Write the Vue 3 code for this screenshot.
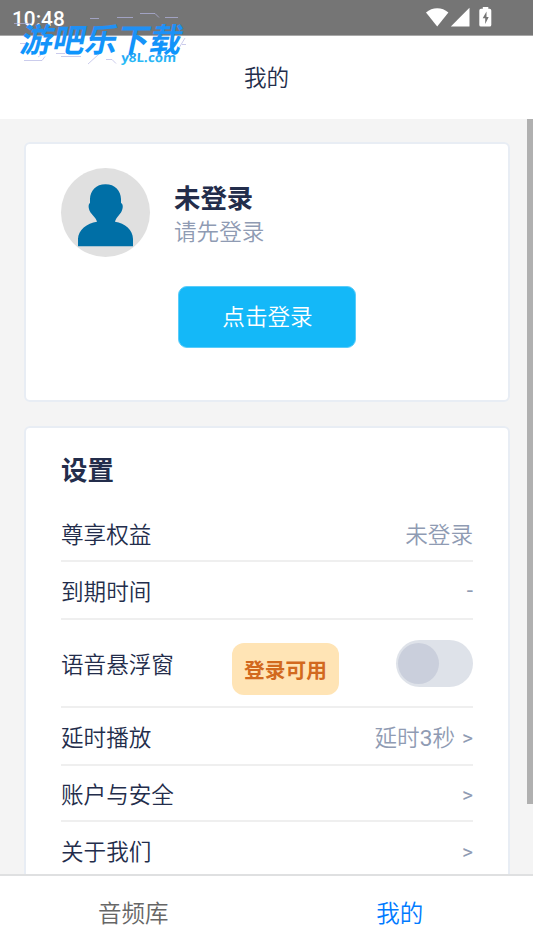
<script setup>
import { ref } from 'vue'

const floating = ref(false)
const activeTab = ref('mine')

const settings = [
    { key: 'vip', label: '尊享权益', value: ['未登录'] },
    { key: 'expire', label: '到期时间', value: ['-'] },
    { key: 'float', label: '语音悬浮窗', badge: '登录可用', toggle: true },
    { key: 'delay', label: '延时播放', value: ['延时', '3', '秒'], arrow: true },
    { key: 'account', label: '账户与安全', arrow: true },
    { key: 'about', label: '关于我们', arrow: true }
]

const tabs = [
    { key: 'library', label: '音频库' },
    { key: 'mine', label: '我的' }
]

// latin parts need a heavier weight to match the chinese glyphs
const isLatin = (part) => /^[\d-]+$/.test(part)
</script>

<template>
    <div class="app">
        <div class="status-bar">
            <span class="clock">10:48</span>
            <svg class="status-icons" width="68" height="22" viewBox="0 0 68 22">
                <path d="M.5 5.500C6.700-.2 16.700-.2 22.900 5.500L11.700 19.500Z" fill="#fff" transform="translate(-.5 0)" />
                <path d="M24.800 19.500H43.500V.8Z" fill="#fff" />
                <path d="M57.500 0h5.500v1.700h1.300q1.700 0 1.700 1.700v14.500q0 1.700-1.700 1.700h-8.600q-1.700 0-1.700-1.700v-14.500q0-1.700 1.700-1.700h1.800Z" transform="translate(-.7 0)" fill="#fff" />
                <path d="M60.500 4.600 56.700 11.300h2.500v5.600l3.500-6.800h-2.200Z" fill="#757575" />
            </svg>
        </div>

        <header class="header">我的</header>

        <svg class="watermark" width="190" height="60" viewBox="0 0 190 60">
            <defs>
                <linearGradient id="brand" x1="0" y1="0" x2="0" y2="1">
                    <stop offset="0" stop-color="#2b8df0" />
                    <stop offset="1" stop-color="#0797ff" />
                </linearGradient>
                <linearGradient id="domain" x1="0" y1="0" x2="0" y2="1">
                    <stop offset="0" stop-color="#168cf5" />
                    <stop offset="1" stop-color="#2fc5f5" />
                </linearGradient>
            </defs>
            <g fill="none" stroke="#b4b6e4" stroke-width=".7">
                <path d="M130 2.500h15l4 4M155 6.500h13M107 6.500h16M4 12.500h18M80 7.500h9M10 32.500h6M46 42.500h9M14 49.500h18l3-4M28 46l7-5M96 48.500h6l4 4M78 53l11-10M169 37l6-10M172 33.500h4M51 45.500h20" />
            </g>
            <text class="brand" transform="translate(9 40.500) skewX(-12) scale(1 1)" textLength="161" lengthAdjust="spacingAndGlyphs">游吧乐下载</text>
            <text class="domain" transform="translate(111 50.500) skewX(-4)" textLength="55" lengthAdjust="spacingAndGlyphs">y8L.com</text>
        </svg>

        <main class="content">
            <section class="card profile">
                <div class="user">
                    <div class="avatar">
                        <svg width="89" height="89" viewBox="0 0 89 89">
                            <path fill="#006fa6" d="M44.500 16.200C35 16.200 29.200 22.500 29 31v4c-1.800 1-1.800 5 0 8.500 1.500 3 6 6 7 10.200C26 55 17 62 17 71v7.300h55V71c0-9-8-16-18-17.300 1-4.200 5-7.200 6.500-10.200 1.800-3.500 1.800-7.500-.5-8.500v-4c-.2-8.500-6-14.800-15.500-14.800Z" />
                        </svg>
                    </div>
                    <div class="user-info">
                        <div class="name">未登录</div>
                        <div class="hint">请先登录</div>
                    </div>
                </div>
                <button class="login-btn">点击登录</button>
            </section>

            <section class="card settings">
                <h2 class="title">设置</h2>
                <div v-for="item in settings" :key="item.key" class="row" :class="item.key">
                    <span class="label">{{ item.label }}</span>
                    <span v-if="item.badge" class="badge">{{ item.badge }}</span>
                    <span v-if="item.toggle" class="switch" :class="{ on: floating }" @click="floating = !floating">
                        <span class="knob"></span>
                    </span>
                    <span v-else class="value">
                        <span v-if="item.value"><span v-for="part in item.value" :key="part"
                                :class="{ latin: isLatin(part) }">{{ part }}</span></span>
                        <span v-if="item.arrow" class="arrow">&gt;</span>
                    </span>
                </div>
            </section>

            <div class="scrollbar"></div>
        </main>

        <nav class="tab-bar">
            <div v-for="tab in tabs" :key="tab.key" class="tab" :class="{ active: activeTab === tab.key }"
                @click="activeTab = tab.key">
                {{ tab.label }}
            </div>
        </nav>
    </div>
</template>

<style>
body {
    margin: 0;
    overflow: hidden;
}
</style>

<style scoped>
.app {
    position: relative;
    display: flex;
    flex-direction: column;
    height: 948px;
    overflow: hidden;
    background: #f4f4f4;
    color: #232d4b;
    font-family: Roboto, "Noto Sans CJK SC", sans-serif;
    font-size: 22.6px;
    font-weight: 350;
}

.status-bar {
    display: flex;
    justify-content: space-between;
    box-sizing: border-box;
    height: 36px;
    padding: 7px 39px 0 12px;
    background: #757575;
    border-bottom: 1px solid #a8a8a8;
    color: #fff;
    flex-shrink: 0;
}

.clock {
    font-size: 20.8px;
    font-weight: 500;
    line-height: 24px;
}

.header {
    height: 83px;
    line-height: 86px;
    background: #fff;
    text-align: center;
    flex-shrink: 0;
}

/* brand mark floats over the status bar and header */
.watermark {
    position: absolute;
    left: 10px;
    top: 11px;
}

.brand {
    font-family: "Noto Sans CJK SC", sans-serif;
    font-size: 33px;
    font-weight: 700;
    fill: url(#brand);
}

.domain {
    font-family: "Open Sans", sans-serif;
    font-size: 12.5px;
    font-weight: 700;
    fill: url(#domain);
}

.content {
    position: relative;
    flex: 1;
    min-height: 0;
    padding: 23px 24px 0;
    overflow: hidden;
}

.card {
    box-sizing: border-box;
    width: 486px;
    background: #fff;
    border: 2px solid #e8edf4;
    border-radius: 6px;
    padding: 0 35px;
}

.profile {
    height: 260px;
    padding-top: 24px;
    margin-bottom: 24px;
}

.user {
    display: flex;
    gap: 24px;
}

.avatar {
    width: 89px;
    height: 89px;
    border-radius: 50%;
    background: #e0e0e0;
    overflow: hidden;
}

.user-info {
    padding-top: 13px;
}

.name {
    font-size: 26.4px;
    font-weight: 700;
    line-height: 36px;
}

.hint {
    line-height: 32px;
    color: #8f9bb3;
}

.login-btn {
    display: block;
    width: 178px;
    height: 62px;
    margin: 29px auto 0;
    padding: 0 0 0 1px;
    border: 1px solid #5accfa;
    border-radius: 9px;
    background: #14b8f8;
    color: #fff;
    font: inherit;
    line-height: 61px;
}

.settings {
    height: 520px;
    padding-top: 23px;
}

.title {
    margin: 0;
    height: 55px;
    font-size: 26.4px;
    font-weight: 700;
    line-height: 40px;
}

.row {
    position: relative;
    display: flex;
    justify-content: space-between;
    align-items: center;
    box-sizing: border-box;
    height: 58px;
    border-bottom: 2px solid #efefef;
}

.row.vip {
    height: 56px;
}

.row.float {
    height: 88px;
}

.row.account {
    height: 56px;
}

.value {
    display: flex;
    align-items: center;
    gap: 7px;
    color: #8f9bb3;
}

.latin {
    font-weight: 400;
}

.arrow {
    padding-top: 3px;
    font-size: 21px;
    font-weight: 400;
}

/* badge hangs over the row between label and switch */
.badge {
    position: absolute;
    left: 171px;
    top: 23px;
    width: 107px;
    height: 52px;
    border-radius: 12px;
    background: #ffe4b5;
    color: #d2691e;
    font-size: 20.7px;
    font-weight: 700;
    line-height: 56px;
    text-align: center;
}

.switch {
    box-sizing: border-box;
    width: 77px;
    height: 47px;
    padding: 3px 2px;
    border-radius: 24px;
    background: #dee2e9;
}

.switch.on {
    background: #14b8f8;
}

.knob {
    display: block;
    width: 41px;
    height: 41px;
    border-radius: 50%;
    background: #cacfdc;
}

.switch.on .knob {
    margin-left: auto;
    background: #fff;
}

.scrollbar {
    position: absolute;
    top: 0;
    right: 0;
    width: 6px;
    height: 685px;
    background: #b0b0b0;
}

.tab-bar {
    display: flex;
    box-sizing: border-box;
    height: 74px;
    border-top: 2px solid #dfe0e1;
    background: #fff;
    flex-shrink: 0;
}

.tab {
    flex: 1;
    text-align: center;
    font-size: 23.5px;
    line-height: 76px;
    color: #666;
}

.tab.active {
    color: #007aff;
}
</style>
